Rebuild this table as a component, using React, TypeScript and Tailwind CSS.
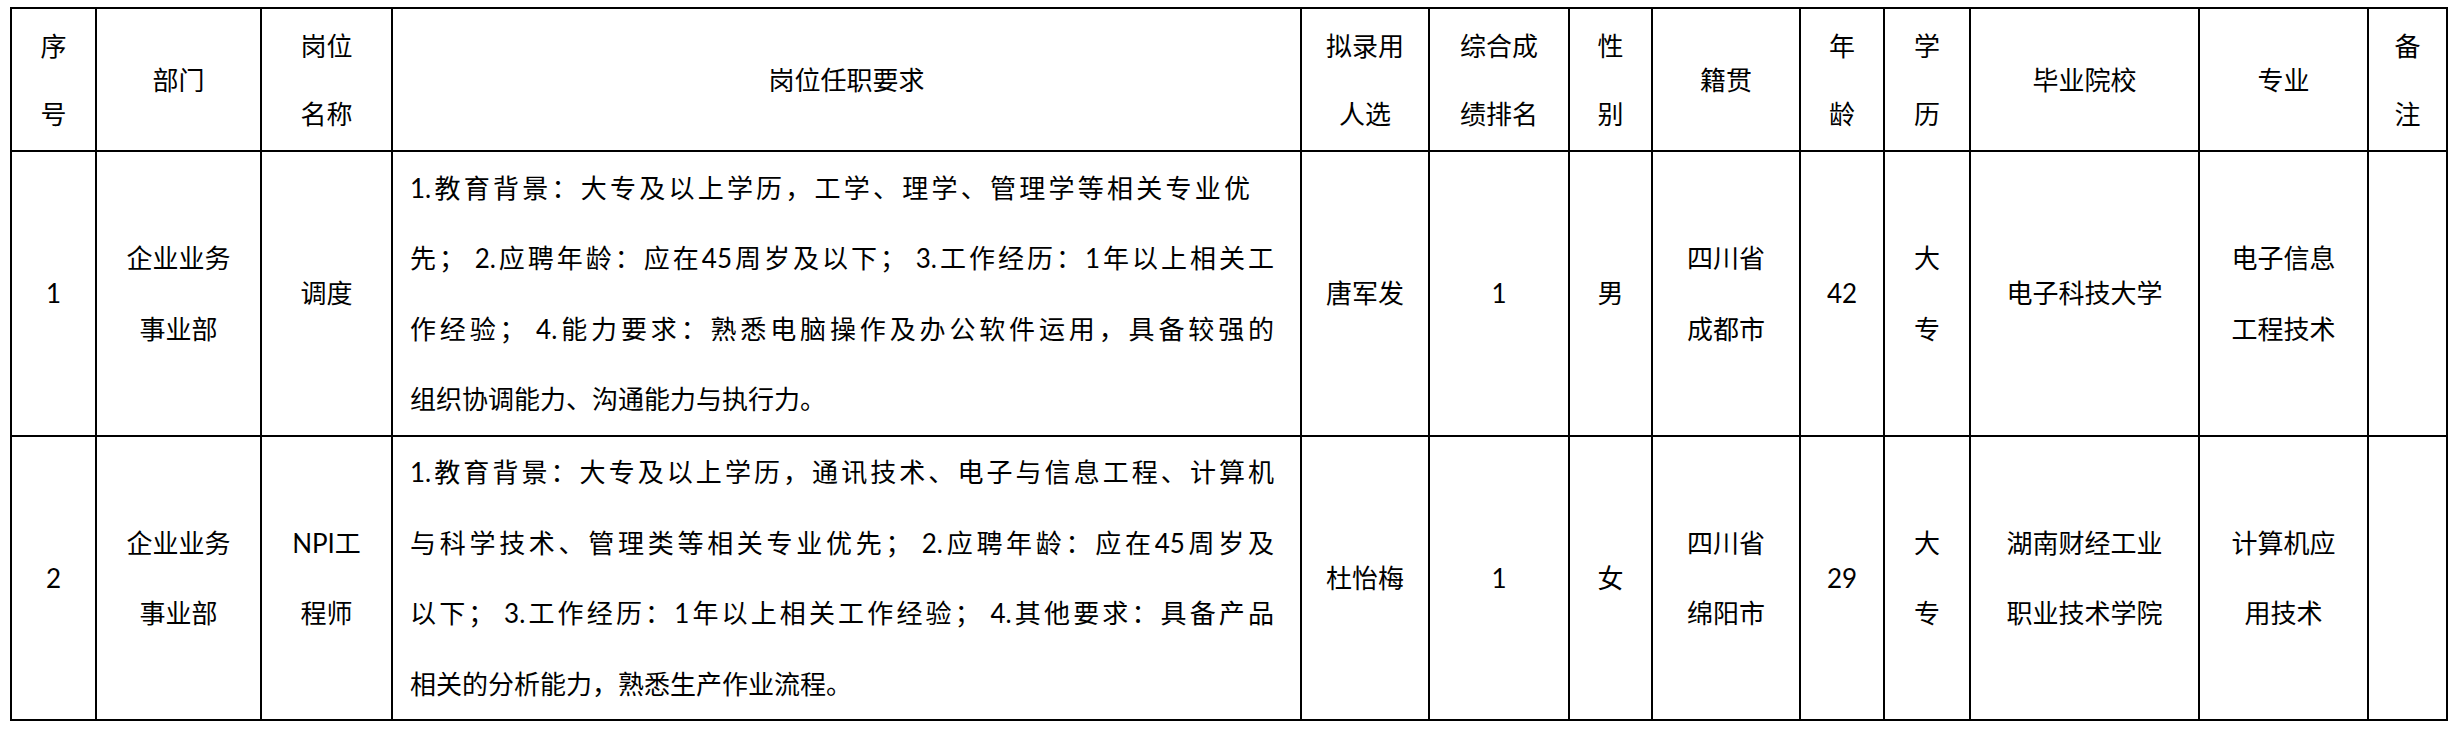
const head = [
  ['序', '号'],
  ['部门'],
  ['岗位', '名称'],
  ['岗位任职要求'],
  ['拟录用', '人选'],
  ['综合成', '绩排名'],
  ['性', '别'],
  ['籍贯'],
  ['年', '龄'],
  ['学', '历'],
  ['毕业院校'],
  ['专业'],
  ['备', '注'],
]

const rows = [
  {
    no: '1',
    dept: ['企业业务', '事业部'],
    post: ['调度'],
    req: [
      '1.教育背景：大专及以上学历，工学、理学、管理学等相关专业优',
      '先； 2.应聘年龄：应在45周岁及以下； 3.工作经历：1年以上相关工',
      '作经验； 4.能力要求：熟悉电脑操作及办公软件运用，具备较强的',
      '组织协调能力、沟通能力与执行力。',
    ],
    shortFirst: true,
    name: ['唐军发'],
    rank: ['1'],
    sex: ['男'],
    origin: ['四川省', '成都市'],
    age: ['42'],
    edu: ['大', '专'],
    school: ['电子科技大学'],
    major: ['电子信息', '工程技术'],
  },
  {
    no: '2',
    dept: ['企业业务', '事业部'],
    post: ['NPI工', '程师'],
    req: [
      '1.教育背景：大专及以上学历，通讯技术、电子与信息工程、计算机',
      '与科学技术、管理类等相关专业优先； 2.应聘年龄：应在45周岁及',
      '以下； 3.工作经历：1年以上相关工作经验； 4.其他要求：具备产品',
      '相关的分析能力，熟悉生产作业流程。',
    ],
    shortFirst: false,
    name: ['杜怡梅'],
    rank: ['1'],
    sex: ['女'],
    origin: ['四川省', '绵阳市'],
    age: ['29'],
    edu: ['大', '专'],
    school: ['湖南财经工业', '职业技术学院'],
    major: ['计算机应', '用技术'],
  },
]

function Cell({ lines, head = false }: { lines: string[]; head?: boolean }) {
  return (
    <div
      className={`flex flex-col items-center justify-center border-r-2 border-b-2 border-black text-center ${
        head ? 'leading-[68px]' : 'leading-[70.5px]'
      }`}
    >
      {lines.map((l, i) => (
        <div key={i} className="whitespace-nowrap">
          {l}
        </div>
      ))}
    </div>
  )
}

// long text column, lines broken as in the source document
function Requirement({ lines, shortFirst }: { lines: string[]; shortFirst: boolean }) {
  return (
    <div className="flex flex-col justify-center border-r-2 border-b-2 border-black pl-[17px] pr-[26px] leading-[70.5px]">
      {lines.map((l, i) => {
        const last = i === lines.length - 1
        return (
          <div
            key={i}
            className={`whitespace-nowrap ${
              last ? 'text-left' : 'text-justify [text-align-last:justify]'
            } ${i === 0 && shortFirst ? 'mr-[24px]' : ''}`}
          >
            {l}
          </div>
        )
      })}
    </div>
  )
}

export default function App() {
  return (
    <div className="min-h-screen bg-white pt-[7px] pl-[10px] text-black">
      <div
        className="grid w-[2438px] grid-cols-[85px_165px_131px_909px_128px_140px_83px_148px_84px_86px_229px_169px_79px] grid-rows-[143px_285px_284px] border-t-2 border-l-2 border-black text-[26px]"
        style={{ fontFamily: "Lato, 'Noto Sans CJK SC', sans-serif" }}
      >
        {head.map((h, i) => (
          <Cell key={i} lines={h} head />
        ))}
        {rows.map((r) => (
          <div key={r.no} className="contents">
            <Cell lines={[r.no]} />
            <Cell lines={r.dept} />
            <Cell lines={r.post} />
            <Requirement lines={r.req} shortFirst={r.shortFirst} />
            <Cell lines={r.name} />
            <Cell lines={r.rank} />
            <Cell lines={r.sex} />
            <Cell lines={r.origin} />
            <Cell lines={r.age} />
            <Cell lines={r.edu} />
            <Cell lines={r.school} />
            <Cell lines={r.major} />
            <Cell lines={[]} />
          </div>
        ))}
      </div>
    </div>
  )
}
